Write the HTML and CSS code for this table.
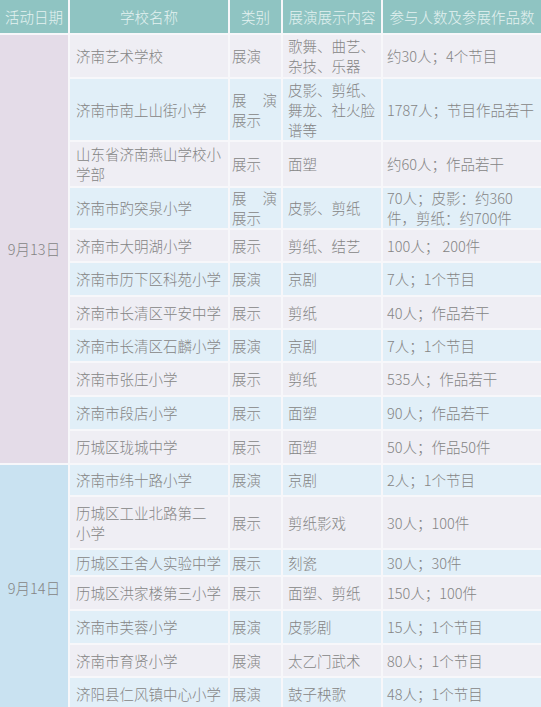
FILE: index.html
```html
<!DOCTYPE html>
<html lang="zh">
<head>
<meta charset="utf-8">
<title>活动日程</title>
<link rel="stylesheet" href="styles.css">
</head>
<body>
<div class="table">
  <div class="row head">
    <div class="c1">活动日期</div>
    <div class="c2">学校名称</div>
    <div class="c3">类别</div>
    <div class="c4">展演展示内容</div>
    <div class="c5">参与人数及参展作品数</div>
  </div>

  <div class="date d13">9月13日</div>
  <div class="date d14">9月14日</div>

  <div class="row a">
    <div class="c2">济南艺术学校</div>
    <div class="c3">展演</div>
    <div class="c4">歌舞、曲艺、<br>杂技、乐器</div>
    <div class="c5">约30人；4个节目</div>
  </div>
  <div class="row b">
    <div class="c2">济南市南上山街小学</div>
    <div class="c3"><span class="spread">展演</span>展示</div>
    <div class="c4">皮影、剪纸、<br>舞龙、社火脸<br>谱等</div>
    <div class="c5">1787人；节目作品若干</div>
  </div>
  <div class="row a">
    <div class="c2">山东省济南燕山学校小<br>学部</div>
    <div class="c3">展示</div>
    <div class="c4">面塑</div>
    <div class="c5">约60人；作品若干</div>
  </div>
  <div class="row b">
    <div class="c2">济南市趵突泉小学</div>
    <div class="c3"><span class="spread">展演</span>展示</div>
    <div class="c4">皮影、剪纸</div>
    <div class="c5">70人；皮影：约360<br>件，剪纸：约700件</div>
  </div>
  <div class="row a">
    <div class="c2">济南市大明湖小学</div>
    <div class="c3">展示</div>
    <div class="c4">剪纸、结艺</div>
    <div class="c5">100人； 200件</div>
  </div>
  <div class="row b">
    <div class="c2">济南市历下区科苑小学</div>
    <div class="c3">展演</div>
    <div class="c4">京剧</div>
    <div class="c5">7人；1个节目</div>
  </div>
  <div class="row a">
    <div class="c2">济南市长清区平安中学</div>
    <div class="c3">展示</div>
    <div class="c4">剪纸</div>
    <div class="c5">40人；作品若干</div>
  </div>
  <div class="row b">
    <div class="c2">济南市长清区石麟小学</div>
    <div class="c3">展演</div>
    <div class="c4">京剧</div>
    <div class="c5">7人；1个节目</div>
  </div>
  <div class="row a">
    <div class="c2">济南市张庄小学</div>
    <div class="c3">展示</div>
    <div class="c4">剪纸</div>
    <div class="c5">535人；作品若干</div>
  </div>
  <div class="row b">
    <div class="c2">济南市段店小学</div>
    <div class="c3">展示</div>
    <div class="c4">面塑</div>
    <div class="c5">90人；作品若干</div>
  </div>
  <div class="row a">
    <div class="c2">历城区珑城中学</div>
    <div class="c3">展示</div>
    <div class="c4">面塑</div>
    <div class="c5">50人；作品50件</div>
  </div>

  <div class="row b">
    <div class="c2">济南市纬十路小学</div>
    <div class="c3">展演</div>
    <div class="c4">京剧</div>
    <div class="c5">2人；1个节目</div>
  </div>
  <div class="row a">
    <div class="c2">历城区工业北路第二<br>小学</div>
    <div class="c3">展示</div>
    <div class="c4">剪纸影戏</div>
    <div class="c5">30人；100件</div>
  </div>
  <div class="row b">
    <div class="c2">历城区王舍人实验中学</div>
    <div class="c3">展示</div>
    <div class="c4">刻瓷</div>
    <div class="c5">30人；30件</div>
  </div>
  <div class="row a">
    <div class="c2">历城区洪家楼第三小学</div>
    <div class="c3">展示</div>
    <div class="c4">面塑、剪纸</div>
    <div class="c5">150人；100件</div>
  </div>
  <div class="row b">
    <div class="c2">济南市芙蓉小学</div>
    <div class="c3">展演</div>
    <div class="c4">皮影剧</div>
    <div class="c5">15人；1个节目</div>
  </div>
  <div class="row a">
    <div class="c2">济南市育贤小学</div>
    <div class="c3">展演</div>
    <div class="c4">太乙门武术</div>
    <div class="c5">80人；1个节目</div>
  </div>
  <div class="row b">
    <div class="c2">济阳县仁风镇中心小学</div>
    <div class="c3">展演</div>
    <div class="c4">鼓子秧歌</div>
    <div class="c5">48人；1个节目</div>
  </div>
</div>
</body>
</html>
```

FILE: styles.css
```css
html, body {
  margin: 0;
  padding: 0;
  background: #f7f7fa;
}

body {
  font-family: "Noto Sans CJK SC", "Noto Sans", sans-serif;
  font-weight: 300;
  font-size: 14.5px;
  line-height: 20px;
  color: #858585;
}

.table {
  display: grid;
  width: 541px;
  grid-template-columns: 68px 158px 51px 98px 158px;
  grid-template-rows: 33px 42px 61px 44px 40px 31px 32px 31px 31px 32px 32px 32px 30px 51px 25px 32px 32px 31px 32px;
  gap: 2px;
  background: #f7f7fa;
}

.row {
  display: contents;
}

.row > div {
  display: flex;
  flex-direction: column;
  justify-content: center;
  align-items: flex-start;
  white-space: nowrap;
}

.head > div {
  background: #8fc4c2;
  color: #e4f2f1;
  align-items: center;
  text-align: center;
}

.a > div {
  background: #efeef4;
}

.b > div {
  background: #e1eff8;
}

.c1 { grid-column: 1; }
.c2 { grid-column: 2; padding-left: 6px; }
.c3 { grid-column: 3; padding-left: 2px; padding-right: 4px; }
.c4 { grid-column: 4; padding-left: 5px; }
.c5 { grid-column: 5; padding-left: 4px; }

.head > .c2,
.head > .c3,
.head > .c4,
.head > .c5 {
  padding-left: 0;
  padding-right: 0;
}

.spread {
  display: block;
  align-self: stretch;
  text-align: justify;
  text-align-last: justify;
}

.date {
  grid-column: 1;
  display: flex;
  align-items: center;
  justify-content: center;
}

.d13 {
  grid-row: 2 / span 11;
  background: #e4dce8;
}

.d14 {
  grid-row: 13 / span 7;
  background: #c9e2f1;
}
```
